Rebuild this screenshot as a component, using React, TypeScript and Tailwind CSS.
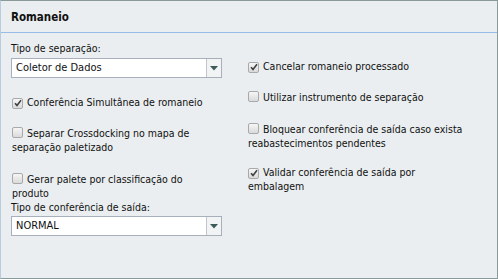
import React from 'react'

function Box({ checked }: { checked?: boolean }) {
  return (
    <span className="inline-flex items-center justify-center w-[11px] h-[11px] mr-[4px] align-[-1px] rounded-[2px] border border-[#a9a9a9] bg-gradient-to-b from-[#f6f6f6] to-[#dadada]">
      {checked && (
        <svg width="8" height="8" viewBox="0 0 8 8">
          <path d="M1 4.2 L3 6.4 L7 1.2" fill="none" stroke="#404040" strokeWidth="1.6" />
        </svg>
      )}
    </span>
  )
}

function Check({ label, checked, className }: { label: string; checked?: boolean; className?: string }) {
  return (
    <div className={className}>
      <Box checked={checked} />
      {label}
    </div>
  )
}

function Select({ value, className }: { value: string; className?: string }) {
  return (
    <div className={`flex w-[211px] h-[20px] border border-[#a8b0bc] bg-white ${className ?? ''}`}>
      <div className="flex-1 pl-[4px] leading-[18px] text-[11px]">{value}</div>
      <div className="w-[15px] border-l border-[#c0c6cc] bg-[#f2f3f4] flex items-center justify-center">
        <svg width="8" height="5" viewBox="0 0 8 5">
          <path d="M0 0 H8 L4 4.5 Z" fill="#3d5a5a" />
        </svg>
      </div>
    </div>
  )
}

export default function App() {
  return (
    <div
      className="w-[498px] h-[279px] bg-[#eaeef0] border border-[#8a9a9a] border-l-[#b8cde0] text-[10.5px] leading-[14px] text-[#111]"
      style={{ fontFamily: '"DejaVu Sans Condensed", "Liberation Sans", Arial, sans-serif' }}
    >
      <div className="h-[32px] border-b border-[#99bbe8] pl-[10px] flex items-center font-bold text-[11.5px]">
        Romaneio
      </div>
      <div className="flex">
        <div className="w-[237px] pl-[10px]">
          <div className="w-[211px]">
            <div className="mt-[8px]">Tipo de separação:</div>
            <Select value="Coletor de Dados" className="mt-[3px]" />
            <div className="w-[206px]">
              <Check className="mt-[17px] pl-px" checked label="Conferência Simultânea de romaneio" />
              <Check className="mt-[17px] pl-px" label="Separar Crossdocking no mapa de separação paletizado" />
              <Check className="mt-[18px] pl-px" label="Gerar palete por classificação do produto" />
            </div>
            <div>Tipo de conferência de saída:</div>
            <Select value="NORMAL" className="mt-[2px]" />
          </div>
        </div>
        <div className="w-[223px] ml-[10px]">
          <Check className="mt-[26px]" checked label="Cancelar romaneio processado" />
          <Check className="mt-[17px]" label="Utilizar instrumento de separação" />
          <Check className="mt-[18px]" label="Bloquear conferência de saída caso exista reabastecimentos pendentes" />
          <Check className="mt-[15px]" checked label="Validar conferência de saída por embalagem" />
        </div>
      </div>
    </div>
  )
}
